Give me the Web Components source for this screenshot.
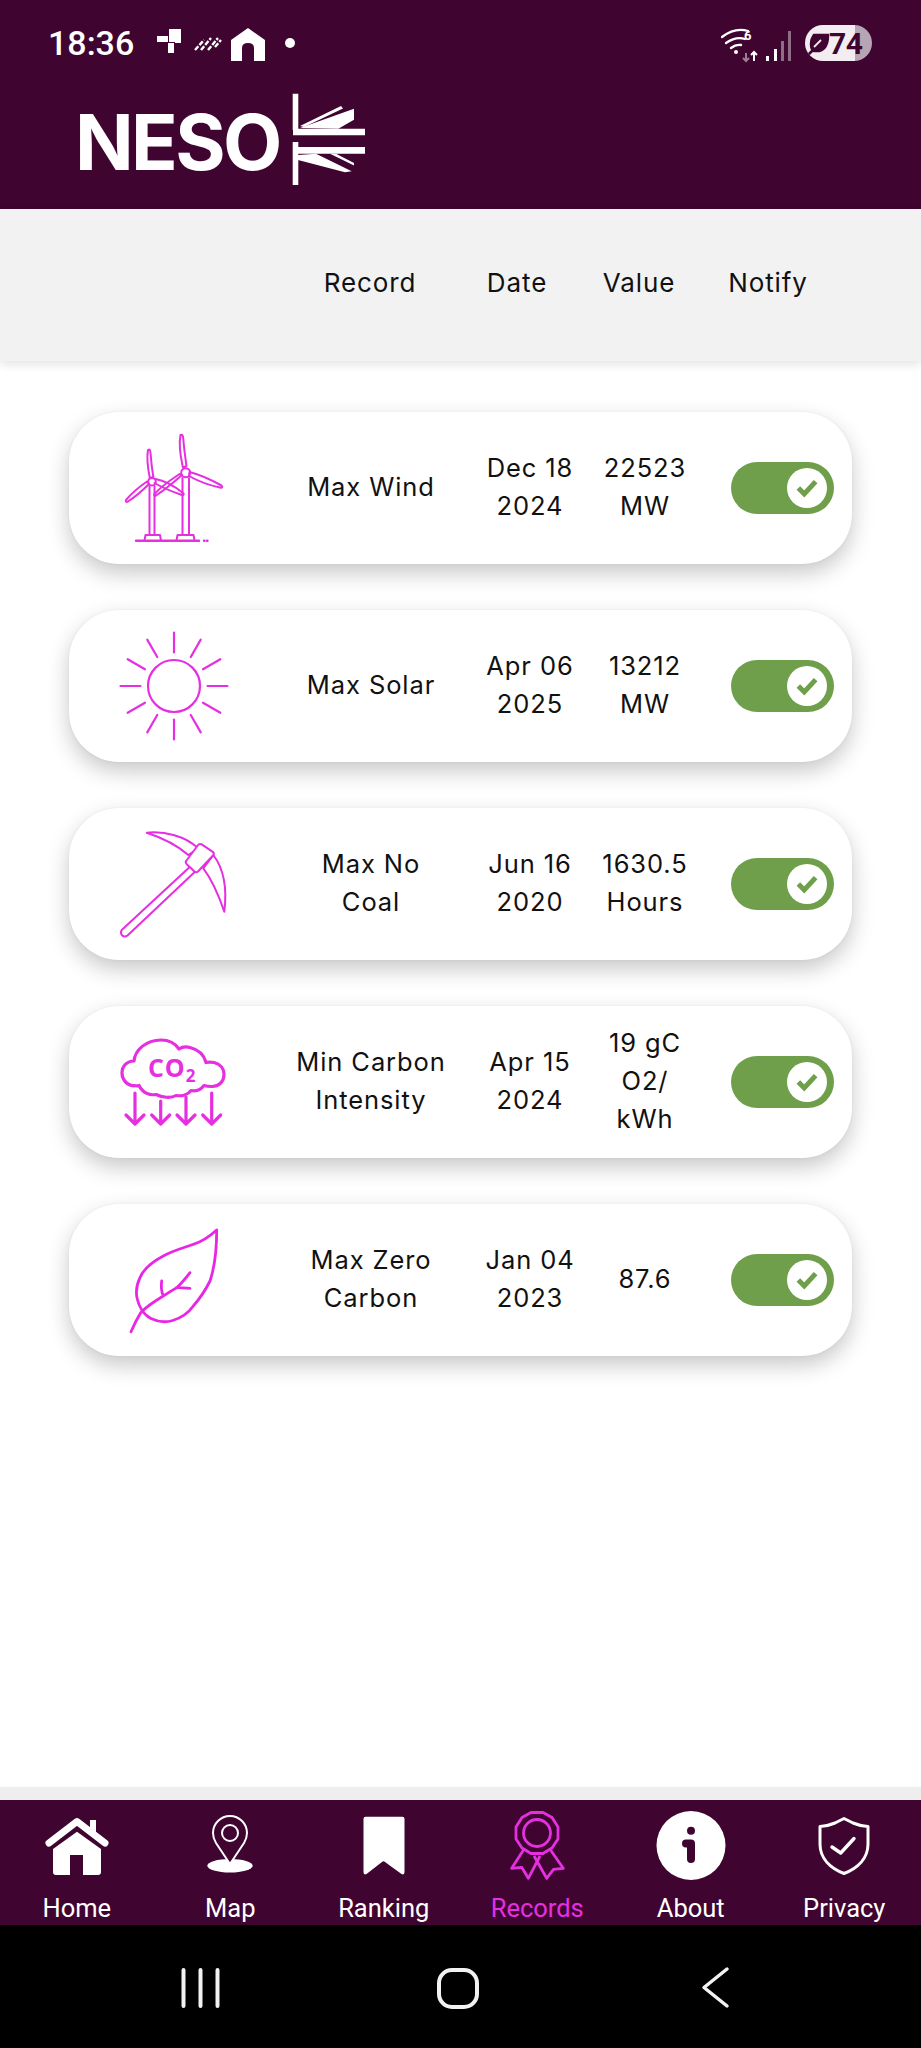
<!DOCTYPE html>
<html><head><meta charset="utf-8">
<style>
html,body{margin:0;padding:0;background:#fff}
body{width:921px;height:2048px;overflow:hidden;display:flex;flex-direction:column;font-family:"Inter","Liberation Sans",sans-serif}
records-list{flex:1}
</style></head><body>
<app-header></app-header>
<records-head></records-head>
<records-list>
<record-card name="Max Wind" date="Dec 18 2024" value="22523 MW" icon="wind"></record-card>
<record-card name="Max Solar" date="Apr 06 2025" value="13212 MW" icon="sun"></record-card>
<record-card name="Max No Coal" date="Jun 16 2020" value="1630.5 Hours" icon="pick"></record-card>
<record-card name="Min Carbon Intensity" date="Apr 15 2024" value="19 gC O2/ kWh" icon="co2"></record-card>
<record-card name="Max Zero Carbon" date="Jan 04 2023" value="87.6" icon="leaf"></record-card>
</records-list>
<bottom-nav></bottom-nav>
<system-nav></system-nav>
<script>
const PINK='#e62fe0';
const ICONS={
wind:`<g fill="none" stroke="${PINK}" stroke-width="2" stroke-linejoin="round" stroke-linecap="round">
<path d="M65.500 7c2-1 2.500 1 2.800 4 .6 9 2 18 3.200 27l-3.600 1.500C65.600 29 63.600 16 65.500 7Z"/>
<path d="M74.500 44c10 2.500 22 8 32 13.500 1.500 1 .5 2.800-1.500 2-10-2-22-6.500-31-11.500Z"/>
<path d="M67 47c-7 6-16 14-26 20.500-1 1-2.500 0-1.500-1.500 6-7 16-14 25-20Z"/>
<circle cx="70.700" cy="44.700" r="4.500"/>
<path d="M33 22c1.500-1 2.300 0 2.500 3 .6 8 1.500 16 2.800 24l-3.500 1C33 41 31.500 30 33 22Z"/>
<path d="M40.500 51c9 1.500 20 8 27.500 14 1.500 1 .5 2.500-1 2-9-3-19-7-27.500-12"/>
<path d="M34 56c-6 6-14 13-21 17.500-1.500 1-2.800 0-2-1.500 5-6 13-13 21-18.500Z"/>
<circle cx="37" cy="53.700" r="3.800"/>
<path d="M34.500 58v49M39.500 58v49M67.500 50v57M74 50v57"/>
<path d="M29.500 112.500l1-5.500h14.500l1 5.500M61.500 112.500l1-5.500h16l1 5.500"/>
<path d="M21 112.700h63M89 112.700h.5M92 112.700h.5" stroke-width="2.400"/>
</g>`,
sun:`<g fill="none" stroke="${PINK}" stroke-width="2.200" stroke-linecap="round"><circle cx="59" cy="60" r="26"/>
${Array.from({length:12},(_,i)=>`<line x1="59" y1="6.500" x2="59" y2="26.500" transform="rotate(${i*30} 59 60)"/>`).join('')}</g>`,
pick:`<g fill="none" stroke="${PINK}" stroke-width="2" stroke-linejoin="round">
<path d="M31.700 8.700C50 7 70 12 83.300 24.300L73.300 31C62 21 48 14 31.700 8.700Z"/>
<path d="M98.300 31C109 45 112 66 109.300 87.700 104 72 98 57 88.300 44.300Z"/>
<path d="M86.700 20.300l11 7.500q2 2 .5 3.500L83 47.500q-2 1.500-3.500 0L71.500 40q-1.500-2 0-3.500L83.500 20.500q1.500-1 3.200-.2Z" fill="#fff"/>
<path d="M75 42.700L6.700 106q-1.700 3 .5 5.500 2.500 2 5.300 0L80 47.700"/></g>`,
co2:`<g fill="none" stroke="${PINK}" stroke-width="3.200" stroke-linecap="round" stroke-linejoin="round">
<path d="M19 64C11 63 7 57 7 51c0-7 5-12 12-12 1-11 12-21 27-21 8 0 14 3 18 9 3-2 7-2.500 11-1.500 8 2 14 7 16 15 2-.5 5-.5 8 0 6 1.500 10 6 10 12 0 7-5 12-12 12-3 0-5 0-8-1-3 4-8 6-13 5-3 4-9 6-15 5-5 3-14 2-20-1-6 1-13-1-17-9-2 1-3 0-5 0Z"/>
<path d="M20 71v30M11 93l9 9 9-9M45.700 79v22M36.700 93l9 9 9-9M71 75v26M62 93l9 9 9-9M96.700 71v30M87.700 93l9 9 9-9"/></g>
<text x="33" y="55" font-family="Open Sans,Liberation Sans,sans-serif" font-size="25" font-weight="700" fill="${PINK}">CO<tspan dy="5" font-size="17" font-weight="700">2</tspan></text>`,
leaf:`<g fill="none" stroke="#e925e6" stroke-width="2.800" stroke-linecap="round" stroke-linejoin="round">
<path d="M101.700 10C94 17 86 22 78.300 24.300 68 28 57 31 48.300 36 37 42 28 50 25 57.700 21 66 21 74 22.300 79 24 87 29 95 36 98.500c7 3.500 15 4 21.700 2 8-2.500 16-8 20.600-14.500C87 76 92 67 95 61c5-15 6.700-33 6.700-51Z"/>
<path d="M16 111.700c3-7 6-13 9.700-19C32 86 40 81 48.300 76c5-3 9-6 13.400-8.300C67 63 71 58 75 52.700M61.700 67.300L75 68.300M48.300 76C46 71 46 66 46.700 61"/></g>`
};
function def(name,html){customElements.define(name,class extends HTMLElement{constructor(){super();this.attachShadow({mode:'open'});}connectedCallback(){this.shadowRoot.innerHTML=typeof html==='function'?html(this):html;}});}

def('status-bar',`<style>
:host{display:flex;align-items:center;height:86px;padding:0 49px 0 48px;box-sizing:border-box;color:#fff;font-family:Roboto,sans-serif}
.t{font-size:34px;font-weight:500;width:109px;line-height:86px}
.l{flex:1;display:flex;align-items:center}
svg{display:block}
.b{width:67px;height:36px;border-radius:18px;background:linear-gradient(90deg,#f3edf1 0 50px,#b8a5b3 50px);display:flex;align-items:center;color:#3f0530;font-size:30px;font-weight:700;margin-left:14px;letter-spacing:-.5px;overflow:hidden}
.b span{margin-left:-2px}
</style>
<div class="t">18:36</div>
<div class="l"><svg width="160" height="40" viewBox="0 0 160 40"><g fill="#fff"><path d="M12 6h12v14h-6v-1H12ZM0 13h11v6H0ZM11 20h6v10h-6Z"/><g stroke="#fff" stroke-width="2.400" stroke-dasharray="5 1.600"><path d="M38 27l9-10M44 27l10-12M51 27l10-12M58 24l6-7"/></g><path d="M74 38V17L91 5l17 12v21H97V25q0-5-6-5t-6 5v13Z"/><circle cx="133" cy="20" r="5"/></g></svg></div>
<svg width="70" height="40" viewBox="0 0 70 40"><g fill="none" stroke="#fff" stroke-width="2.300" stroke-linecap="round"><path d="M1 14q13-10 26-6M5 20q10-7 19-4M10 25q5-4 10-3"/></g><circle cx="15" cy="29" r="2" fill="#fff"/><text x="23" y="17" fill="#fff" font-family="Roboto,sans-serif" font-size="13" font-weight="700">6</text><path d="M25 38v-8M22 33l3-3 3 3" stroke="#9a7f93" stroke-width="2" fill="none" transform="rotate(180 25 34)"/><path d="M33 38v-9M30 32l3-3 3 3" stroke="#fff" stroke-width="2" fill="none"/><path d="M45 38v-5h3v5ZM53 38V26h3v12Z" fill="#fff"/><path d="M60 38V18h3v20ZM67 38V8h3v30Z" fill="#8d6e86"/></svg>
<div class="b"><svg width="26" height="30" viewBox="0 0 26 30"><path d="M9 7h14q0 14-9 16H9q-3-1-3-7 0-5 3-9ZM3 27l9-9" fill="#3f0530" stroke="#3f0530" stroke-width="2.500"/><path d="M9 19l7-7" stroke="#f3edf1" stroke-width="1.800"/></svg><span>74</span></div>`);

def('app-header',`<style>
:host{display:block;background:#3f0530;height:209px;overflow:hidden}
.logo{display:flex;align-items:center;padding-left:75px;height:123px;color:#fff;font-family:"Inter",sans-serif;font-size:77px;font-weight:700;letter-spacing:-2.600px;margin-top:-6px}
.logo span{width:215px;flex:none}
svg{display:block;filter:blur(.5px)}
</style>
<status-bar></status-bar>
<div class="logo"><span>NESO</span><svg width="80" height="100" viewBox="0 0 80 100"><g fill="#fff"><path d="M2.700 1.700h5.600V38H2.700ZM2.700 50h5.600v43H2.700Z"/><path d="M3 36.700h72v6.600H3ZM3 55h72v6.700H3Z"/><path d="M10 36L64 16.700V27.700L48.300 36.700Z"/><path d="M10 34L51 14l2 2.500L14 35Z"/><path d="M8 63L26 61.700 61.700 79.300 55 80.300 8 68Z"/><path d="M40 61.700h6L64 71v2.500Z"/></g></svg></div>`);

def('records-head',`<style>
:host{display:flex;align-items:center;height:152px;background:#f2f2f2;box-shadow:0 3px 10px rgba(0,0,0,.12);color:#111;font:400 26px "Inter",sans-serif;letter-spacing:.9px;position:relative;padding-bottom:5px;box-sizing:border-box}
span{display:block;text-align:center}
</style>
<span style="margin-left:290px;width:160px">Record</span><span style="width:134px">Date</span><span style="width:110px">Value</span><span style="width:148px">Notify</span>`);

def('toggle-switch',`<style>
:host{display:block;width:103px;height:52px;border-radius:26px;background:#6f9f4a;position:relative;flex:none}
i{position:absolute;right:7px;top:6px;width:40px;height:40px;border-radius:50%;background:#fff;display:flex;align-items:center;justify-content:center}
</style><i><svg width="24" height="20" viewBox="0 0 26 22"><path d="M3.500 11l6.500 6.500L22.500 4" fill="none" stroke="#6f9f4a" stroke-width="5.500"/></svg></i>`);

def('records-list',`<style>:host{display:flex;flex-direction:column;gap:46px;padding:51px 69px 0}</style><slot></slot>`);

def('record-card',h=>`<style>
:host{display:flex;align-items:center;height:152px;border-radius:50px;background:#fff;box-shadow:0 9px 22px rgba(0,0,0,.22),0 0 3px rgba(0,0,0,.05);color:#111;font:400 25.500px/38px "Inter",sans-serif;letter-spacing:.9px;text-align:center;flex:none}
svg{display:block;margin-left:46px;flex:none}
.r{margin-left:57px;width:158px;flex:none;padding-bottom:3px}
.d{margin-left:28px;width:104px;flex:none;padding-bottom:3px}
.v{margin-left:18px;width:90px;flex:none;padding-bottom:3px}
toggle-switch{margin-left:41px}
</style><svg width="120" height="120" viewBox="0 0 120 120">${ICONS[h.getAttribute('icon')]}</svg>
<div class="r">${h.getAttribute('name')}</div><div class="d">${h.getAttribute('date')}</div><div class="v">${h.getAttribute('value')}</div><toggle-switch></toggle-switch>`);

const W='#fff';
const NAV={
Home:`<g fill="${W}"><path d="M53 10h6v14h-6Z"/><path d="M40 21.700L64 39V62q0 3-3 3H46V45H33V65H19q-3 0-3-3V39Z"/></g><path d="M12 33L40 11.500 68 33" fill="none" stroke="${W}" stroke-width="7" stroke-linecap="round" stroke-linejoin="round"/>`,
Map:`<ellipse cx="40" cy="55.700" rx="22.700" ry="6.700" fill="${W}"/><path d="M40 54L26 33q-3-5-3-10a17 17 0 0 1 34 0q0 5-3 10Z" fill="#3f0530" stroke="${W}" stroke-width="2" stroke-linejoin="round"/><circle cx="40" cy="23" r="8" fill="none" stroke="${W}" stroke-width="2"/>`,
Ranking:`<path d="M21.500 6.700H58.500q2 0 2 2V62q0 3.500-3 2L41 52q-1.500-1.300-3 0L22.500 64q-3 1.500-3-2V8.700q0-2 2-2Z" fill="${W}"/>`,
Records:`<g fill="none" stroke="currentColor" stroke-width="2.800" stroke-linejoin="round"><path d="M34 2.500h12l9 5 6 9.500v12l-6 9-9 5.500H34l-9-5.500-6-9V17l6-9.500Z"/><circle cx="40" cy="23" r="13.500"/><path d="M26.500 40L14.700 58.300l10-1 6.600 11L43 46M53.500 40l12.800 18.300-9.800 1-6.800 9L37 46"/></g>`,
About:`<circle cx="40" cy="35.500" r="34.500" fill="${W}"/><circle cx="40" cy="20.700" r="4" fill="#3f0530"/><path d="M35 33.500h5V49" fill="none" stroke="#3f0530" stroke-width="8" stroke-linecap="round" stroke-linejoin="round"/>`,
Privacy:`<path d="M40 8.500l9 4.500q7 3 15 3.500V34c0 14-10 24-24 29.500C26 58 16 48 16 34V16.500q8-.5 15-3.500Z" fill="none" stroke="${W}" stroke-width="3" stroke-linejoin="round"/><path d="M28 37l8.700 6L50 28.500" fill="none" stroke="${W}" stroke-width="3.400" stroke-linecap="round" stroke-linejoin="round"/>`
};
def('nav-item',h=>{const l=h.getAttribute('label');return `<style>
:host{display:flex;flex-direction:column;align-items:center;flex:1;color:${l==='Records'?PINK:'#fff'};font:400 25.500px/32px Roboto,sans-serif;white-space:nowrap}
svg{display:block;margin-bottom:12px;flex:none}
</style><svg width="80" height="70" viewBox="0 0 80 70">${NAV[l]}</svg>${l}`});

def('bottom-nav',`<style>
:host{display:flex;height:138px;box-sizing:border-box;background:#3f0530;padding-top:10px;border-top:13px solid #eeeeee;overflow:hidden;flex:none}
</style>
<nav-item label="Home"></nav-item><nav-item label="Map"></nav-item><nav-item label="Ranking"></nav-item><nav-item label="Records"></nav-item><nav-item label="About"></nav-item><nav-item label="Privacy"></nav-item>`);

def('system-nav',`<style>:host{display:flex;height:123px;background:#000;flex:none;justify-content:center;align-items:flex-start}svg{display:block}</style>
<svg width="921" height="123" viewBox="0 0 921 123"><g fill="none" stroke="#f2f2f2" stroke-linecap="round"><path d="M183.500 45v36M200.500 45v36M217.500 45v36" stroke-width="4"/><rect x="439" y="45" width="38" height="37" rx="13" stroke-width="4"/><path d="M727 44L704 62.500 727 81" stroke-width="3.500" stroke-linejoin="round"/></g></svg>`);
</script>
</body></html>
